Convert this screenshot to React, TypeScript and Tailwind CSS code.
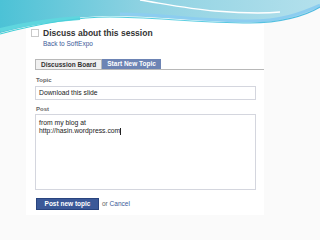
import React from "react";

function Wave() {
  return (
    <svg
      className="absolute left-0 top-0 pointer-events-none"
      width="320"
      height="40"
      viewBox="0 0 320 40"
    >
      <defs>
        <linearGradient id="wv" x1="0" y1="0" x2="1" y2="0">
          <stop offset="0" stopColor="#4cc2d6" />
          <stop offset="0.45" stopColor="#8fd2e2" />
          <stop offset="1" stopColor="#b3e0ec" />
        </linearGradient>
        <linearGradient id="wv2" x1="0" y1="0" x2="1" y2="0">
          <stop offset="0" stopColor="#3ecfd6" />
          <stop offset="0.6" stopColor="#5fcfe2" />
          <stop offset="1" stopColor="#4fb8e0" />
        </linearGradient>
      </defs>
      <path
        d="M0 0 H320 V6 C305 16 280 23 250 22 C200 21 150 16 110 16 C70 16 30 25 0 33 Z"
        fill="url(#wv)"
      />
      <path
        d="M0 30 C25 24 50 20 80 18"
        fill="none"
        stroke="#5fd6de"
        strokeWidth="4"
      />
      <path
        d="M120 14 C160 14 200 21 250 21 C280 21 300 14 320 5"
        fill="none"
        stroke="#8ccdf0"
        strokeWidth="3"
      />
      <path
        d="M140 0 C165 4 190 9 215 11 C240 13 260 14 280 12"
        fill="none"
        stroke="#ffffff"
        strokeWidth="1.5"
      />
      <path
        d="M0 34 C30 26 70 17 110 17 C150 17 200 23 250 23 C280 23 305 16 320 7"
        fill="none"
        stroke="url(#wv2)"
        strokeWidth="1.2"
      />
    </svg>
  );
}

export default function App() {
  return (
    <div
      className="relative w-[320px] h-[240px] overflow-hidden bg-[#fafafa]"
      style={{ fontFamily: '"Liberation Sans", Arial, sans-serif' }}
    >
      <div className="ml-[26px] w-[238px] h-[215px] bg-white pt-[28px] flex flex-col">
        <div className="flex items-start pl-[5px]">
          <div className="w-[8px] h-[8px] mt-[1px] border border-[#c9c9c9] bg-white" />
          <div className="ml-[4px] flex flex-col">
            <span className="text-[8.5px] leading-[10px] font-bold text-[#333333]">
              Discuss about this session
            </span>
            <span className="mt-[2px] text-[6.5px] leading-[8px] text-[#3b5998]">
              Back to SoftExpo
            </span>
          </div>
        </div>

        <div className="mt-[11px] ml-[9px] flex border-b border-[#b8b8b8]">
          <div className="h-[10px] px-[5px] flex items-center bg-[#f0f0f0] border border-b-0 border-[#b8b8b8] text-[6.5px] font-bold text-[#333333]">
            Discussion Board
          </div>
          <div className="h-[10px] px-[5px] flex items-center bg-[#6d84b4] text-[6.5px] font-bold text-white">
            Start New Topic
          </div>
        </div>

        <div className="ml-[9px] w-[221px] flex flex-col">
          <span className="mt-[6px] ml-[1px] text-[6px] leading-[8px] font-semibold text-[#666666]">
            Topic
          </span>
          <div className="mt-[2px] h-[14px] border border-[#d4d6de] flex items-center px-[3px] text-[6.8px] text-[#222222]">
            Download this slide
          </div>
          <span className="mt-[5px] ml-[1px] text-[6px] leading-[8px] font-semibold text-[#666666]">
            Post
          </span>
          <div className="mt-[1px] h-[76px] border border-[#d4d6de] px-[3px] pt-[4px] text-[6.8px] leading-[8px] text-[#222222]">
            <div>from my blog at</div>
            <div className="flex items-center">
              http://hasin.wordpress.com
              <span className="inline-block w-[1px] h-[7px] bg-[#222222]" />
            </div>
          </div>
          <div className="mt-[8px] flex items-center">
            <div className="w-[63px] h-[12px] ml-[1px] bg-[#3b5998] border border-[#29447e] flex items-center justify-center text-[6.5px] font-bold text-white">
              Post new topic
            </div>
            <span className="ml-[3px] text-[6.5px] text-[#666666]">
              or <span className="text-[#3b5998]">Cancel</span>
            </span>
          </div>
        </div>
      </div>
      <Wave />
    </div>
  );
}
